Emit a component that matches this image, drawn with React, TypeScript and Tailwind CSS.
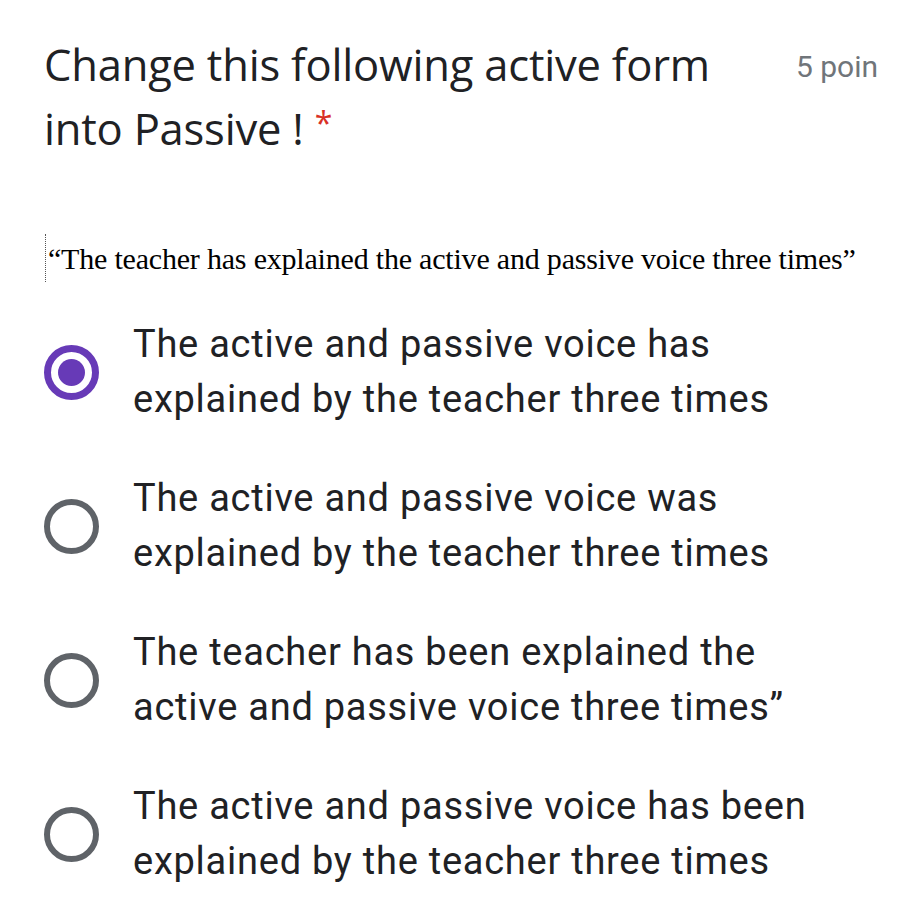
import React from 'react'

const options = [
  { id: 1, label: 'The active and passive voice has explained by the teacher three times', checked: true },
  { id: 2, label: 'The active and passive voice was explained by the teacher three times', checked: false },
  { id: 3, label: 'The teacher has been explained the active and passive voice three times\u201d', checked: false },
  { id: 4, label: 'The active and passive voice has been explained by the teacher three times', checked: false },
]

function Radio({ checked }: { checked: boolean }) {
  if (checked) {
    return (
      <div className="w-[55px] h-[55px] rounded-full border-[7px] border-[#673ab7] flex items-center justify-center shrink-0">
        <div className="w-[27px] h-[27px] rounded-full bg-[#673ab7]" />
      </div>
    )
  }
  return <div className="w-[55px] h-[55px] rounded-full border-[6px] border-[#5f6368] shrink-0" />
}

export default function App() {
  return (
    <div className="w-[912px] h-[923px] bg-white overflow-hidden" style={{ fontFamily: 'Roboto, sans-serif' }}>
      {/* Title */}
      <div className="flex pl-[44px] pt-[33px]">
        <h1
          className="w-[700px] text-[43.5px] leading-[64px] text-[#202124] tracking-[-0.2px]"
          style={{ fontFamily: "'Open Sans', sans-serif" }}
        >
          Change this following active form into Passive !{' '}
          <span className="inline-block text-[32px] leading-[40px] text-[#d93025] align-top pt-[6px]">*</span>
        </h1>
        <div className="ml-auto pr-[34px] pt-[14px] text-[30px] leading-[40px] text-[#70757a] whitespace-nowrap overflow-hidden">
          5 poin
        </div>
      </div>

      {/* Image sentence */}
      <div className="mt-[73px] ml-[45px] flex items-center h-[48px] border-l border-dotted border-[#555]">
        <span
          className="pl-[2px] text-[30px] text-black whitespace-nowrap tracking-[-0.2px]"
          style={{ fontFamily: "'Liberation Serif', serif" }}
        >
          {'\u201cThe teacher has explained  the active and passive voice three times\u201d'}
        </span>
      </div>

      {/* Options */}
      <div className="mt-[35px] flex flex-col gap-[44px]">
        {options.map((o) => (
          <div key={o.id} className="flex items-center">
            <div className="w-[133px] pl-[44px]">
              <Radio checked={o.checked} />
            </div>
            <div className="w-[700px] text-[38px] leading-[55px] tracking-[0.75px] text-[#202124]">{o.label}</div>
          </div>
        ))}
      </div>
    </div>
  )
}
